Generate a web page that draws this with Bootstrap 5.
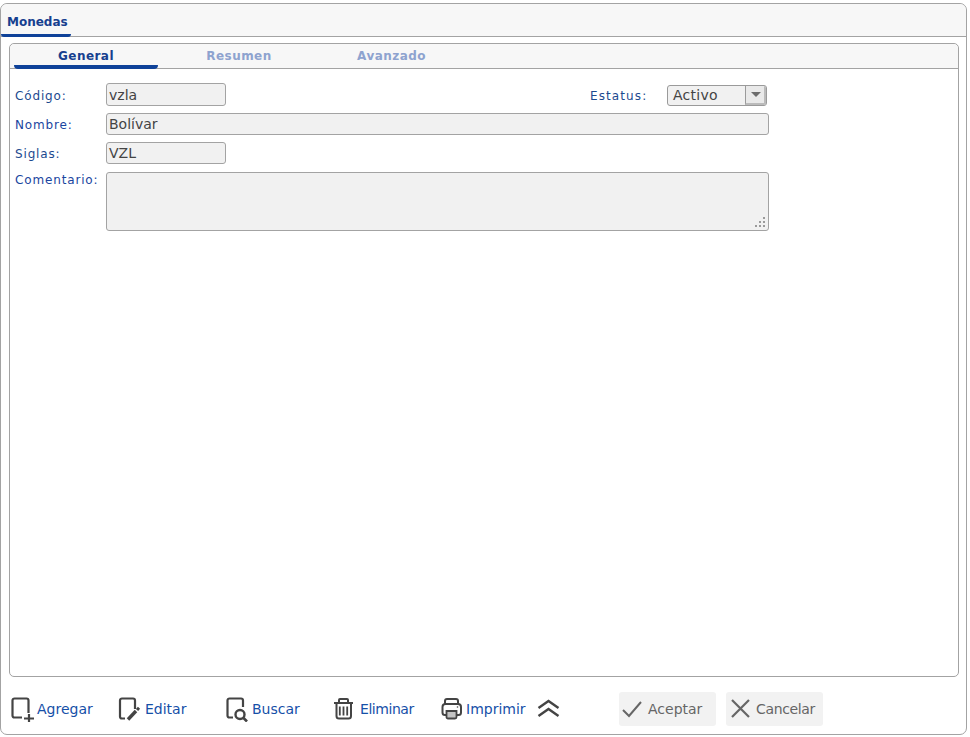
<!DOCTYPE html>
<html lang="es">
<head>
<meta charset="utf-8">
<title>Monedas</title>
<link href="https://cdn.jsdelivr.net/npm/bootstrap@5.3.0/dist/css/bootstrap.min.css" rel="stylesheet">
<style>
html,body{height:100%;background:#fff;overflow:hidden}
body{padding:3px 3px 2px 0;font-family:"DejaVu Sans",sans-serif;font-size:13px;color:#444}
.win{height:732px;border:1px solid #a3a3a3;border-radius:7px;background:#fff}
.win-head{height:33px;background:#f7f7f7;border-bottom:1px solid #a3a3a3;border-radius:7px 7px 0 0}
.win-tab{width:70px;height:33px;padding:10px 0 0 6px;margin-bottom:-1px;font-weight:700;font-size:12px;color:#16408f;border-bottom:3px solid #0f4299;border-radius:0 0 3px 3px;line-height:16px}
.inner{margin:6px 7px 0 8px;height:634px;border:1px solid #a3a3a3;border-radius:5px}
.inner-head{height:25px;background:#f7f7f7;border-bottom:1px solid #a3a3a3;border-radius:5px 5px 0 0;padding-left:4px}
.sub-tab{height:25px;margin-bottom:-1px;text-align:center;font-weight:700;font-size:12px;letter-spacing:.45px;line-height:24px;color:#8ea3cf}
.sub-tab.on{width:144px;color:#16408f;border-bottom:4px solid #0f4299;border-radius:0 0 4px 4px;line-height:24px}
.sub-b{width:162px}
.sub-c{width:143px}
.form-zone{padding:14px 0 0 5px}
.lbl{width:91px;font-size:12px;letter-spacing:.85px;color:#1c4a8f;flex:none;position:relative;top:1px}
.lbl-req{color:#1a45a0}
.lbl-top{top:-1px}
.fld{height:23px;border:1px solid #a3a3a3;border-radius:3px;background:#f1f1f1;padding:0 2px;font-size:14px;line-height:22px;color:#444}
.w-s{width:120px}
.w-l{width:663px}
.r1{height:23px}
.r2{height:22px;margin-top:7px}
.r2 .fld,.r3 .fld{height:22px;line-height:21px}
.r3{height:22px;margin-top:7px}
.r4{margin-top:8px}
.area{height:59px;width:663px;position:relative;padding:0}
.grip{position:absolute;right:2px;bottom:2px}
.sel-lbl{width:77px;margin-left:364px;font-size:12px;letter-spacing:1.1px;color:#1c4a8f;position:relative;top:1px}
.sel{width:100px;height:21px;margin-top:1px;border:1px solid #9a9a9a;border-radius:3px;background:#f1f1f1;font-size:14px;letter-spacing:.25px;color:#444;padding-left:5px;line-height:18px;position:relative}
.sel-btn{position:absolute;right:0;top:0;width:21px;height:19px;background:#e9e9e9;border-left:1px solid #9a9a9a;border-right:2px solid #bbb;border-bottom:2px solid #bbb;border-radius:0 2px 2px 0}
.sel-btn:after{content:"";position:absolute;left:5px;top:6px;border-left:5px solid transparent;border-right:5px solid transparent;border-top:5px solid #6c6c6c}
.foot{padding:15px 0 0 9px;height:55px}
.act{display:flex;align-items:center;height:34px;font-size:14px;color:#1650a8;white-space:nowrap;flex:none}
.act svg{flex:none}
.a1{width:107px}.a2{width:108px}.a3{width:107px}.a4{width:107px}.a5{width:97px}
.a6{width:83px}
.a2 span{margin-left:1px}
.a4 span{margin-left:1px;letter-spacing:-.45px}
.gbtn{height:34px;background:#f2f2f2;border-radius:3px;color:#666;font-size:14px;display:flex;align-items:center;flex:none}
.b1{width:97px;padding-left:1px}.b2{width:97px;margin-left:10px;padding-left:2px}
.b2 span{letter-spacing:-.35px}
</style>
</head>
<body>
<div class="win">
  <div class="win-head"><div class="win-tab">Monedas</div></div>
  <div class="inner">
    <div class="inner-head d-flex">
      <div class="sub-tab on">General</div>
      <div class="sub-tab sub-b">Resumen</div>
      <div class="sub-tab sub-c">Avanzado</div>
    </div>
    <div class="form-zone">
      <div class="d-flex align-items-center r1">
        <div class="lbl">Código:</div>
        <div class="fld w-s">vzla</div>
        <div class="sel-lbl">Estatus:</div>
        <div class="sel">Activo<span class="sel-btn"></span></div>
      </div>
      <div class="d-flex align-items-center r2">
        <div class="lbl lbl-req">Nombre:</div>
        <div class="fld w-l">Bolívar</div>
      </div>
      <div class="d-flex align-items-center r3">
        <div class="lbl">Siglas:</div>
        <div class="fld w-s">VZL</div>
      </div>
      <div class="d-flex r4">
        <div class="lbl lbl-req lbl-top">Comentario:</div>
        <div class="fld area">
          <svg class="grip" width="11" height="11" viewBox="0 0 11 11" fill="#9a9a9a"><rect x="8" y="0" width="2" height="2"/><rect x="4" y="4" width="2" height="2"/><rect x="8" y="4" width="2" height="2"/><rect x="0" y="8" width="2" height="2"/><rect x="4" y="8" width="2" height="2"/><rect x="8" y="8" width="2" height="2"/></svg>
        </div>
      </div>
    </div>
  </div>
  <div class="foot d-flex">
    <div class="act a1">
      <svg width="27" height="26" viewBox="0 0 27 26" fill="none" stroke="#444" stroke-width="2.200"><path d="M12 21.500H4.500a2 2 0 0 1-2-2V4.500a2 2 0 0 1 2-2h12a2 2 0 0 1 2 2V17"/><path d="M14 22.500h10M19 18v8.500"/></svg>
      <span>Agregar</span>
    </div>
    <div class="act a2">
      <svg width="27" height="26" viewBox="0 0 27 26" fill="none" stroke="#444" stroke-width="2.200"><path d="M8 22.500H5a2 2 0 0 1-2-2V4.500a2 2 0 0 1 2-2h11a2 2 0 0 1 2 2V13"/><path d="M11 23.500l8-8.500" stroke-width="3.400"/><path d="M20 14l2-2.200" stroke-width="3"/></svg>
      <span>Editar</span>
    </div>
    <div class="act a3">
      <svg width="27" height="26" viewBox="0 0 27 26" fill="none" stroke="#444" stroke-width="2.200"><path d="M8 21.500H4.500a2 2 0 0 1-2-2V4.500a2 2 0 0 1 2-2H16a2 2 0 0 1 2 2V11"/><circle cx="15" cy="18.500" r="4.500" stroke-width="2.400"/><path d="M18.500 22l3.500 3.500" stroke-width="2.600"/></svg>
      <span>Buscar</span>
    </div>
    <div class="act a4">
      <svg width="27" height="26" viewBox="0 0 27 26" fill="none" stroke="#444" stroke-width="2"><path d="M2 7h19M7 6.500V4a1 1 0 0 1 1-1h7a1 1 0 0 1 1 1v2.500" /><path d="M4.500 8v12a2.500 2.500 0 0 0 2.500 2.500h9.500a2.500 2.500 0 0 0 2.500-2.500V8"/><path d="M7.800 10.500v9M11.500 10.500v9M15.200 10.500v9" stroke-width="1.800"/></svg>
      <span>Eliminar</span>
    </div>
    <div class="act a5">
      <svg width="27" height="26" viewBox="0 0 27 26" fill="none" stroke="#444" stroke-width="2"><path d="M6 8V5a2 2 0 0 1 2-2h9a2 2 0 0 1 2 2v3"/><path d="M7 19H6a2.500 2.500 0 0 1-2.500-2.500V11a3 3 0 0 1 3-3h12.500a3 3 0 0 1 3 3v5.500A2.500 2.500 0 0 1 19.500 19H18"/><path d="M7.500 15h10v6a1.500 1.500 0 0 1-1.500 1.500H9A1.500 1.500 0 0 1 7.500 21z" fill="#c4c4c4" stroke-width="1.800"/><circle cx="18.500" cy="11" r=".8" fill="#444" stroke="none"/></svg>
      <span>Imprimir</span>
    </div>
    <div class="act a6">
      <svg width="24" height="22" viewBox="0 0 24 22" fill="none" stroke="#444" stroke-width="2.400"><path d="M2.500 10l10-7 10 7M2.500 18l10-7 10 7"/></svg>
    </div>
    <div class="gbtn b1">
      <svg width="24" height="24" viewBox="0 0 24 24" fill="none" stroke="#666" stroke-width="2" class="me-1"><path d="M3 13l6 6L21 5"/></svg>
      <span>Aceptar</span>
    </div>
    <div class="gbtn b2">
      <svg width="24" height="24" viewBox="0 0 24 24" fill="none" stroke="#666" stroke-width="2.200" class="me-1"><path d="M4 3l17 17M21 3L4 20"/></svg>
      <span>Cancelar</span>
    </div>
  </div>
</div>
<script src="https://cdn.jsdelivr.net/npm/bootstrap@5.3.0/dist/js/bootstrap.bundle.min.js"></script>
</body>
</html>
